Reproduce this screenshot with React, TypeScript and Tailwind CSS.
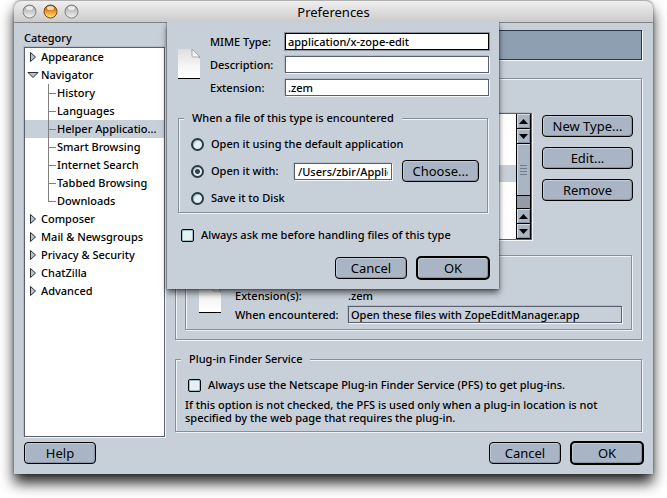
import type { ReactNode } from "react";

const etched =
  "border border-[#868e99] shadow-[1px_1px_0_#eff3f7,inset_1px_1px_0_#eff3f7]";
const sunken = "border border-[#5b6070] shadow-[1px_1px_0_#f4f7fa,-1px_-1px_0_#b4bcc7]";

function Button({ children, className = "", primary = false }: { children: ReactNode; className?: string; primary?: boolean }) {
  return (
    <button
      type="button"
      className={`flex shrink-0 items-center justify-center bg-[#a9b5c4] text-[13px] leading-4 font-normal shadow-[inset_1px_1px_0_#c3cbd6,inset_-1px_-1px_0_#8994a5] ${
        primary ? "h-6 w-[74px] rounded-[5px] border-2 border-black" : "h-[22px] rounded-[4px] border border-black"
      } ${className}`}
    >
      {children}
    </button>
  );
}

function Radio({ id, label, checked = false }: { id: string; label: string; checked?: boolean }) {
  return (
    <div className="flex items-center gap-[7px]">
      <input
        id={id}
        type="radio"
        name="handling"
        defaultChecked={checked}
        className="size-[13px] shrink-0 appearance-none rounded-full border-2 border-[#2b3a48] bg-[#e2eff1] shadow-[inset_1px_1px_0_#a9c3c8] checked:bg-[radial-gradient(circle,#36424f_2px,#e2eff1_3px)]"
      />
      <label htmlFor={id} className="whitespace-nowrap">{label}</label>
    </div>
  );
}

function Check({ id, label }: { id: string; label: string }) {
  return (
    <div className="flex items-center gap-[7px]">
      <input
        id={id}
        type="checkbox"
        className="size-[13px] shrink-0 appearance-none rounded-[2px] border border-black bg-[#e6f1f3] shadow-[inset_1px_1px_0_#9fc0c4,inset_-1px_-1px_0_#9fc0c4] checked:bg-[#36424f]"
      />
      <label htmlFor={id} className="whitespace-nowrap">{label}</label>
    </div>
  );
}

function PageIcon() {
  return (
    <svg width="22" height="30" viewBox="0 0 22 30" className="shrink-0" aria-hidden="true">
      <defs>
        <linearGradient id="page" x1="0" y1="0" x2="0" y2="1">
          <stop offset="0" stopColor="#dedede" />
          <stop offset="0.6" stopColor="#f6f6f6" />
          <stop offset="1" stopColor="#ffffff" />
        </linearGradient>
        <linearGradient id="fold" x1="0" y1="1" x2="1" y2="0">
          <stop offset="0" stopColor="#ffffff" />
          <stop offset="1" stopColor="#e5e5e5" />
        </linearGradient>
      </defs>
      <path d="M0 0H14L22 8V29H0Z" fill="url(#page)" />
      <path d="M13 1L22 10V8H16Z" fill="#a8a8a8" opacity="0.7" />
      <path d="M14 0L22 8H15Q14 8 14 7Z" fill="url(#fold)" stroke="#8a8a8a" strokeWidth="0.7" />
      <rect y="29" width="22" height="1" fill="#000" />
    </svg>
  );
}

function Light({ on = false }: { on?: boolean }) {
  const id = on ? "amber" : "clear";
  return (
    <svg width="15" height="15" viewBox="0 0 15 15" aria-hidden="true">
      <defs>
        <linearGradient id={id} x1="0" y1="0" x2="0" y2="1">
          <stop offset="0" stopColor={on ? "#9a4a08" : "#9a9a9a"} />
          <stop offset="0.45" stopColor={on ? "#ec8d1c" : "#c6c6c6"} />
          <stop offset="1" stopColor={on ? "#fff08a" : "#f4f4f4"} />
        </linearGradient>
      </defs>
      <circle cx="7.5" cy="7.5" r="6.5" fill={`url(#${id})`} stroke={on ? "#7a4818" : "#808080"} />
      <ellipse cx="7.5" cy="4" rx="3.5" ry="2" fill="#fff" opacity="0.75" />
    </svg>
  );
}

function Twisty({ open = false }: { open?: boolean }) {
  return (
    <svg width="12" height="12" viewBox="0 0 12 12" className="shrink-0" aria-hidden="true">
      <path d={open ? "M1 3.5H11L6 8.5Z" : "M3.5 1.5V10.5L8.5 6Z"} fill="#b5c2d0" stroke="#26323e" />
    </svg>
  );
}

function Branch({ label, open = false }: { label: string; open?: boolean }) {
  return (
    <div className="flex h-[18px] items-center gap-[2px] pl-[2px]">
      <Twisty open={open} />
      <span>{label}</span>
    </div>
  );
}

function Leaf({ label, last = false, selected = false }: { label: string; last?: boolean; selected?: boolean }) {
  return (
    <li className={`flex h-[18px] items-center pl-[23px] ${selected ? "bg-[#c7cfd8]" : ""}`}>
      <span className="mr-px flex h-full w-2 shrink-0 flex-col">
        <span className="h-[10px] border-b border-l border-[#808080]" />
        <span className={`h-2 ${last ? "" : "border-l border-[#808080]"}`} />
      </span>
      <span className="whitespace-nowrap">{label}</span>
    </li>
  );
}

function ScrollArrow({ down = false }: { down?: boolean }) {
  return (
    <button
      type="button"
      aria-label={down ? "Scroll down" : "Scroll up"}
      className="flex h-[15px] w-full items-center justify-center border-b border-black bg-[#aab5c3] shadow-[inset_1px_1px_0_#d5dce4,inset_-1px_-1px_0_#8792a2]"
    >
      <svg width="9" height="5" viewBox="0 0 9 5" aria-hidden="true">
        <path d={down ? "M0 0H9L4.5 5Z" : "M0 5H9L4.5 0Z"} fill="#000" />
      </svg>
    </button>
  );
}

function Field({ id, label, value, focused = false }: { id: string; label: string; value: string; focused?: boolean }) {
  return (
    <div className="flex items-center">
      <label htmlFor={id} className="w-[75px] shrink-0 whitespace-nowrap">{label}</label>
      <input
        id={id}
        defaultValue={value}
        className={`h-[17px] min-w-0 flex-1 bg-white px-[2px] outline-none ${
          focused ? "border border-black shadow-[0_0_0_1px_#8b93a0]" : sunken
        }`}
      />
    </div>
  );
}

function TypeDialog() {
  return (
    <form className="absolute top-[22px] left-[153px] w-[332px] bg-[#c7cfd8] pt-[11px] pr-[9px] pb-[9px] pl-[10px] shadow-[0_4px_6px_rgba(0,0,0,0.55),0_0_2px_rgba(0,0,0,0.6)] [clip-path:inset(0_-12px_-14px_-12px)]">
      <div className="flex gap-[10px] pr-px pl-px">
        <div className="pt-4"><PageIcon /></div>
        <div className="flex flex-1 flex-col gap-[6px]">
          <Field id="mime" label="MIME Type:" value="application/x-zope-edit" focused />
          <Field id="description" label="Description:" value="" />
          <Field id="extension" label="Extension:" value=".zem" />
        </div>
      </div>

      <fieldset className={`mt-[14px] mr-[2px] ml-px h-[103px] pr-2 pl-3 ${etched}`}>
        <legend className="ml-[-7px] h-4 bg-[#c7cfd8] px-2 leading-4">When a file of this type is encountered</legend>
        <div className="mt-[10px] flex flex-col gap-2">
          <Radio id="default-app" label="Open it using the default application" />
          <div className="flex h-[22px] items-center">
            <Radio id="open-with" label="Open it with:" checked />
            <input
              aria-label="Application path"
              defaultValue="/Users/zbir/Applications/ZopeEditManager.app"
              className={`ml-auto h-[17px] w-[98px] bg-white px-[3px] outline-none ${sunken}`}
            />
            <Button className="ml-[10px] w-[77px]">Choose...</Button>
          </div>
          <Radio id="save-disk" label="Save it to Disk" />
        </div>
      </fieldset>

      <div className="mt-[14px] pl-1"><Check id="always-ask" label="Always ask me before handling files of this type" /></div>
      <div className="mt-[13px] flex items-center justify-end gap-[9px]">
        <Button className="w-[72px]">Cancel</Button>
        <Button primary>OK</Button>
      </div>
    </form>
  );
}

export default function App() {
  return (
    <main className="overflow-hidden bg-white px-[14px] pb-6 font-['Noto_Sans','Lucida_Grande',sans-serif] text-[11px] leading-4 font-medium text-black">
      <div className="relative rounded-t-[8px] bg-[#c7cfd8] shadow-[0_9px_14px_rgba(0,0,0,0.85),0_0_3px_rgba(0,0,0,0.4)]">
        <header className="relative flex h-[23px] items-center rounded-t-[8px] border-t border-b border-t-[#b0b0b0] border-b-[#828282] bg-linear-to-b from-[#efefef] to-[#cbcbcb] pl-2">
          <div className="flex gap-[6px]"><Light /><Light on /><Light /></div>
          <h1 className="mr-[65px] flex-1 text-center text-[13px] font-normal">Preferences</h1>
        </header>

        <div className="pt-[7px] pr-[9px] pb-[9px] pl-[10px]">
          <div className="flex gap-[9px]">
            <nav className="flex w-[142px] shrink-0 flex-col" aria-label="Category">
              <h2 className="mb-px font-medium">Category</h2>
              <div className={`mr-px flex-1 bg-white ${sunken}`}>
                <Branch label="Appearance" />
                <Branch label="Navigator" open />
                <ul>
                  <Leaf label="History" />
                  <Leaf label="Languages" />
                  <Leaf label="Helper Applicatio..." selected />
                  <Leaf label="Smart Browsing" />
                  <Leaf label="Internet Search" />
                  <Leaf label="Tabbed Browsing" />
                  <Leaf label="Downloads" last />
                </ul>
                <Branch label="Composer" />
                <Branch label="Mail & Newsgroups" />
                <Branch label="Privacy & Security" />
                <Branch label="ChatZilla" />
                <Branch label="Advanced" />
              </div>
            </nav>

            <div className="min-w-0 flex-1 pr-[2px] pb-[5px]">
              <div className="h-[30px] border border-[#2c3848] bg-[#8f9fb2] shadow-[1px_1px_0_#f4f7fa]" />
              <section className={`mt-[18px] px-[9px] pt-[34px] pb-[9px] ${etched}`}>
                <div className="-mr-px flex gap-[10px]">
                  <div className={`flex h-[127px] flex-1 bg-white ${sunken}`}>
                    <div className="flex-1 pt-[51px]"><div className="h-[17px] bg-[#c7cfd8]" /></div>
                    <div className="flex w-[15px] flex-col border-x border-black">
                      <ScrollArrow />
                      <ScrollArrow down />
                      <div className="flex h-[52px] flex-col items-center justify-center gap-[2px] border-b border-black bg-[#aab5c3] shadow-[inset_1px_1px_0_#d5dce4]">
                        <span className="h-px w-[7px] bg-[#6f7b8b]" />
                        <span className="h-px w-[7px] bg-[#6f7b8b]" />
                        <span className="h-px w-[7px] bg-[#6f7b8b]" />
                        <span className="h-px w-[7px] bg-[#6f7b8b]" />
                      </div>
                      <div className="flex-1 border-b border-black bg-[#969ca3]" />
                      <ScrollArrow />
                      <ScrollArrow down />
                    </div>
                  </div>
                  <div className="flex flex-col gap-[10px] pt-[2px]">
                    <Button className="w-[91px]">New Type...</Button>
                    <Button className="w-[91px]">Edit...</Button>
                    <Button className="w-[91px]">Remove</Button>
                  </div>
                </div>
                <div className={`mt-[15px] flex gap-[14px] pt-[27px] pr-[9px] pb-[6px] pl-[13px] ${etched}`}>
                  <PageIcon />
                  <dl className="grid flex-1 grid-cols-[113px_1fr] items-center gap-y-[2px] pt-[5px]">
                    <dt>Extension(s):</dt>
                    <dd>.zem</dd>
                    <dt>When encountered:</dt>
                    <dd className={`h-[17px] px-[2px] ${sunken}`}>Open these files with ZopeEditManager.app</dd>
                  </dl>
                </div>
              </section>

              <fieldset className={`mt-[11px] px-[9px] pb-[7px] ${etched}`}>
                <legend className="ml-[-4px] h-4 bg-[#c7cfd8] px-2 leading-4">Plug-in Finder Service</legend>
                <div className="mt-[10px] pl-[3px]">
                  <Check id="pfs" label="Always use the Netscape Plug-in Finder Service (PFS) to get plug-ins." />
                </div>
                <p className="mt-[5px] leading-[13px]">
                  If this option is not checked, the PFS is used only when a plug-in location is not specified by the web page that requires the plug-in.
                </p>
              </fieldset>
            </div>
          </div>

          <footer className="mt-1 flex items-center gap-[9px]">
            <Button className="mr-auto w-[72px]">Help</Button>
            <Button className="w-[72px]">Cancel</Button>
            <Button primary>OK</Button>
          </footer>
        </div>

        <TypeDialog />
      </div>
    </main>
  );
}
